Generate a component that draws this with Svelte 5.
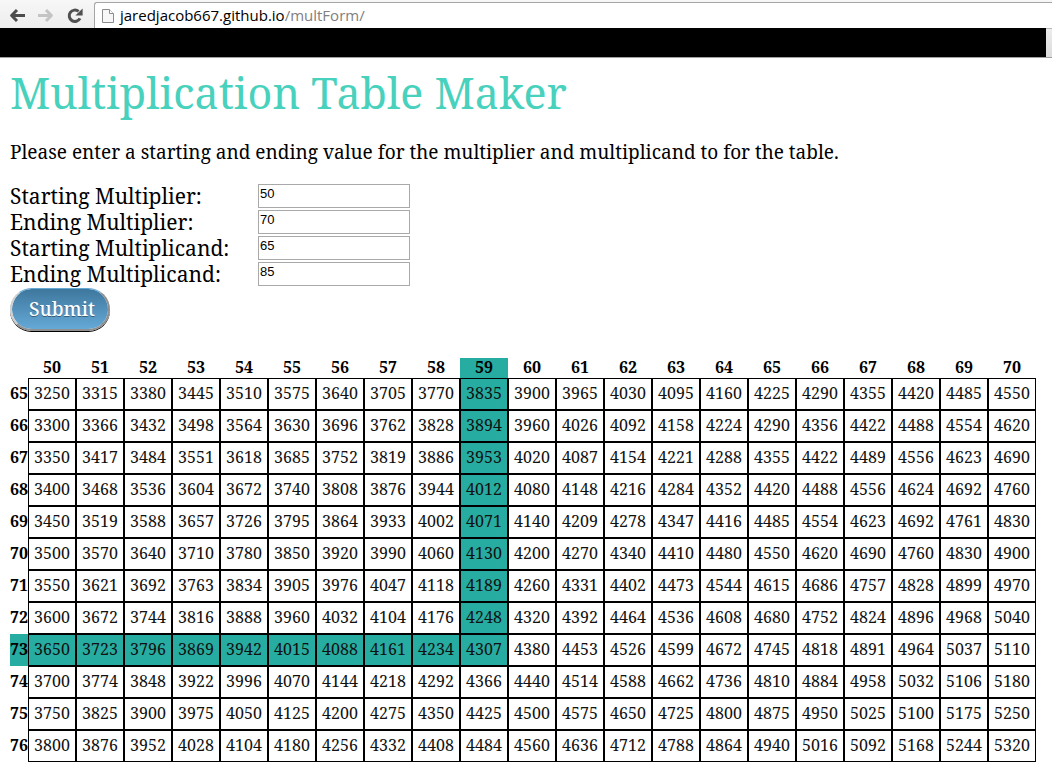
<script>
  const fields = $state([
    { id: 'start-multiplier', label: 'Starting Multiplier:', value: '50' },
    { id: 'end-multiplier', label: 'Ending Multiplier:', value: '70' },
    { id: 'start-multiplicand', label: 'Starting Multiplicand:', value: '65' },
    { id: 'end-multiplicand', label: 'Ending Multiplicand:', value: '85' }
  ]);

  const range = (from, to) => Array.from({ length: to - from + 1 }, (_, i) => from + i);
  const columns = range(50, 70);
  const rows = range(65, 76);

  // The cell under the pointer; its column above and its row to the left are tinted.
  let active = $state({ col: 59, row: 73 });

  const lit = (col, row) =>
    (col === active.col && row <= active.row) || (row === active.row && col <= active.col);
</script>

<header class="toolbar">
  <nav class="nav">
    <button type="button" aria-label="Back">
      <svg width="18" height="16" viewBox="0 0 18 16" fill="none" stroke="#4c4c4c" stroke-width="3" stroke-linejoin="round">
        <path d="M9 2 3.6 7.5 9 13M4 7.5H17" />
      </svg>
    </button>
    <button type="button" aria-label="Forward">
      <svg width="18" height="16" viewBox="0 0 18 16" fill="none" stroke="#c4c4c4" stroke-width="3" stroke-linejoin="round">
        <path d="M9 2 14.4 7.5 9 13M14 7.5H1" />
      </svg>
    </button>
    <button type="button" aria-label="Reload">
      <svg width="18" height="16" viewBox="0 0 18 16">
        <path d="M14 10.4A5.7 5.7 0 1 1 12.6 3.4" fill="none" stroke="#505050" stroke-width="3" />
        <path d="M16.6.4v7H9.4z" fill="#505050" />
      </svg>
    </button>
  </nav>
  <div class="address">
    <svg width="13" height="16" viewBox="0 0 13 16" fill="#f7f7f7" stroke="#8c8c8c">
      <path d="M.5 1.5h7l4 4v9H.5z" />
      <path d="M7.5 1.5v4h4" fill="#fff" />
    </svg>
    <span class="url">jaredjacob667.github.io<span class="path">/multForm/</span></span>
  </div>
</header>
<div class="band"><div class="black"></div></div>

<main>
  <h1>Multiplication Table Maker</h1>
  <p>Please enter a starting and ending value for the multiplier and multiplicand to for the table.</p>

  <form onsubmit={(e) => e.preventDefault()}>
    {#each fields as field (field.id)}
      <div class="field">
        <label for={field.id}>{field.label}</label>
        <input id={field.id} type="text" bind:value={field.value} />
      </div>
    {/each}
    <button class="submit" type="submit">Submit</button>
  </form>

  <table>
    <thead>
      <tr>
        <td class="corner"></td>
        {#each columns as col}
          <th scope="col" class:lit={col === active.col}>{col}</th>
        {/each}
      </tr>
    </thead>
    <tbody>
      {#each rows as row}
        <tr>
          <th scope="row" class:lit={row === active.row}>{row}</th>
          {#each columns as col}
            <td class:lit={lit(col, row)} onmouseenter={() => (active = { col, row })}>{col * row}</td>
          {/each}
        </tr>
      {/each}
    </tbody>
  </table>
</main>

<style>
  :global(body) {
    margin: 0;
    background: #fff;
    color: #000;
    font-family: 'Noto Serif', 'Droid Serif', serif;
  }

  .toolbar {
    display: flex;
    height: 28px;
    background: linear-gradient(#f7f7f7, #ededed);
  }

  .nav {
    display: flex;
    flex: none;
    gap: 11px;
    width: 86px;
    padding: 8px 0 0 8px;
  }

  .nav button {
    width: 18px;
    height: 16px;
    padding: 0;
    border: 0;
    background: none;
  }

  .nav svg,
  .address svg {
    display: block;
    flex: none;
  }

  .address {
    display: flex;
    flex: 1;
    align-items: center;
    gap: 5px;
    box-sizing: border-box;
    margin-top: 2px;
    padding-left: 7px;
    border: solid #a5a5a5;
    border-width: 1px 0 0 1px;
    border-top-left-radius: 3px;
    background: #fff;
  }

  .url {
    padding-bottom: 2px;
    font: 15px/20px 'Open Sans', sans-serif;
    white-space: nowrap;
  }

  .path {
    color: #808080;
  }

  .band {
    padding-right: 6px;
    border-bottom: 1px solid #a0a0a0;
    background: linear-gradient(#b8b8b8 1px, #ececec 1px, #dcdcdc);
  }

  .black {
    height: 29px;
    background: #000;
  }

  main {
    padding: 6px 10px 0;
  }

  h1 {
    margin: 0;
    color: #48d1bc;
    font-size: 43px;
    font-weight: 400;
    line-height: 58px;
  }

  p {
    margin: 18px 0;
    font-size: 19px;
    line-height: 24px;
    padding-bottom: 2px;
  }

  .field {
    display: grid;
    grid-template-columns: 248px 152px;
    height: 26px;
  }

  label {
    font-size: 21px;
    line-height: 24px;
  }

  input {
    box-sizing: border-box;
    height: 24px;
    padding: 0 1px 6px;
    border: 1px solid #a9a9a9;
    background: #fff;
    color: #000;
    font: 13px 'Liberation Sans', Arial, sans-serif;
  }

  .submit {
    display: block;
    width: 100px;
    height: 43px;
    margin-bottom: 27px;
    padding: 0 0 0 4px;
    border: solid;
    border-width: 1px 2px 2px;
    border-color: #65a9d7 #8f8f8f #8f8f8f #cfcfcf;
    border-radius: 22px;
    background: linear-gradient(#3e779d, #65a9d7) padding-box;
    box-shadow: 0 1px 0 #000;
    color: #fff;
    font: 500 19px 'Noto Serif', 'Droid Serif', serif;
    text-shadow: 0 1px 0 rgba(0, 0, 0, 0.4);
  }

  table {
    border-spacing: 0;
    table-layout: fixed;
    width: 100%;
    max-width: 1026px;
    font-size: 16px;
  }

  th,
  td {
    box-sizing: border-box;
    padding: 0;
    text-align: center;
  }

  .corner {
    width: 18px;
  }

  thead th {
    padding-bottom: 2px;
    height: 20px;
    line-height: 18px;
  }

  tbody th,
  tbody td {
    height: 32px;
    padding-bottom: 2px;
    line-height: 28px;
  }

  tbody td {
    border: 1px solid #000;
    color: #111;
  }

  .lit {
    background: #26aca1;
  }
</style>
